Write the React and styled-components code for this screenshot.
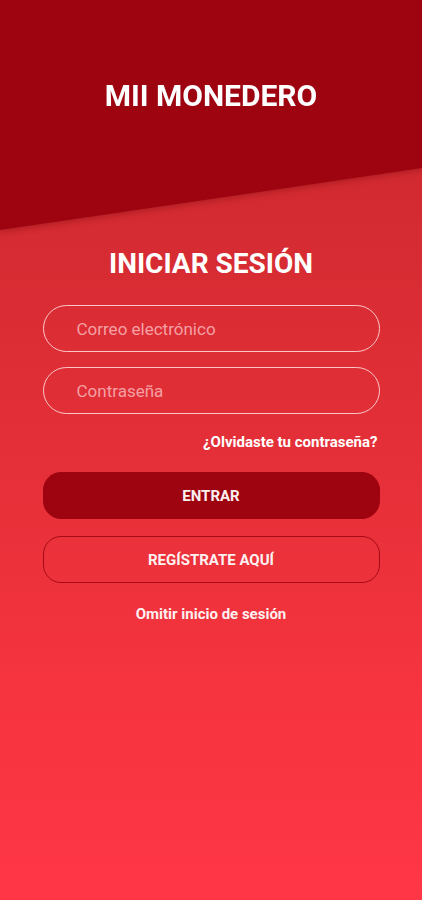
import styled, { createGlobalStyle } from "styled-components";

const GlobalStyle = createGlobalStyle`
  html, body {
    margin: 0;
    padding: 0;
  }
  body {
    font-family: Roboto, "Liberation Sans", Arial, sans-serif;
    background: #ff3646;
  }
  * {
    box-sizing: border-box;
  }
`;

const Screen = styled.div`
  min-height: 900px;
  width: 100%;
  background: linear-gradient(180deg, #c9262d 0%, #d52b32 26%, #f6343f 78%, #ff3646 100%);
  display: flex;
  flex-direction: column;
`;

const HeaderShadow = styled.div`
  filter: drop-shadow(0 2px 3px rgba(90, 0, 0, 0.3));
`;

const Header = styled.header`
  height: 230px;
  background: #9d0410;
  clip-path: polygon(0 0, 100% 0, 100% 168px, 0 230px);
  display: flex;
  justify-content: center;
  padding-top: 78px;
`;

const Brand = styled.h1`
  margin: 0;
  color: #fff;
  font-size: 30px;
  line-height: 36px;
  font-weight: 700;
`;

const Form = styled.form`
  width: 337px;
  margin: 0 auto;
  display: flex;
  flex-direction: column;
`;

const Title = styled.h2`
  margin: 17px 0 25px;
  text-align: center;
  color: #fff;
  font-size: 28px;
  line-height: 33px;
  font-weight: 700;
`;

const Field = styled.input`
  height: 47px;
  width: 100%;
  border-radius: 24px;
  border: 1.5px solid rgba(255, 225, 225, 0.85);
  background: transparent;
  padding: 0 0 0 33px;
  font-family: inherit;
  font-size: 17px;
  color: #fff;
  outline: none;
  margin-bottom: ${(p) => p.$gap || 0}px;

  &::placeholder {
    color: #f4a0a4;
  }
`;

const Forgot = styled.a`
  align-self: flex-end;
  margin: 19px 2px 21px 0;
  color: #fff;
  font-size: 15px;
  line-height: 18px;
  font-weight: 700;
  text-decoration: none;
`;

const Button = styled.button`
  height: 47px;
  width: 100%;
  border-radius: 18px;
  border: 1px solid ${(p) => (p.$outline ? "#a50a16" : "#9d0410")};
  background: ${(p) => (p.$outline ? "transparent" : "#9d0410")};
  color: #fdf0f0;
  font-family: inherit;
  font-size: 15px;
  font-weight: 700;
  margin-bottom: ${(p) => p.$gap || 0}px;
`;

const Skip = styled.a`
  margin-top: 22px;
  text-align: center;
  color: #fdf0f0;
  font-size: 15px;
  line-height: 18px;
  font-weight: 700;
  text-decoration: none;
`;

export default function App() {
  return (
    <>
      <GlobalStyle />
      <Screen>
        <HeaderShadow>
          <Header>
            <Brand>MII MONEDERO</Brand>
          </Header>
        </HeaderShadow>
        <Form onSubmit={(e) => e.preventDefault()}>
          <Title>INICIAR SESIÓN</Title>
          <Field type="email" placeholder="Correo electrónico" $gap={15} />
          <Field type="password" placeholder="Contraseña" />
          <Forgot href="#">¿Olvidaste tu contraseña?</Forgot>
          <Button type="submit" $gap={17}>ENTRAR</Button>
          <Button type="button" $outline>REGÍSTRATE AQUÍ</Button>
          <Skip href="#">Omitir inicio de sesión</Skip>
        </Form>
      </Screen>
    </>
  );
}
